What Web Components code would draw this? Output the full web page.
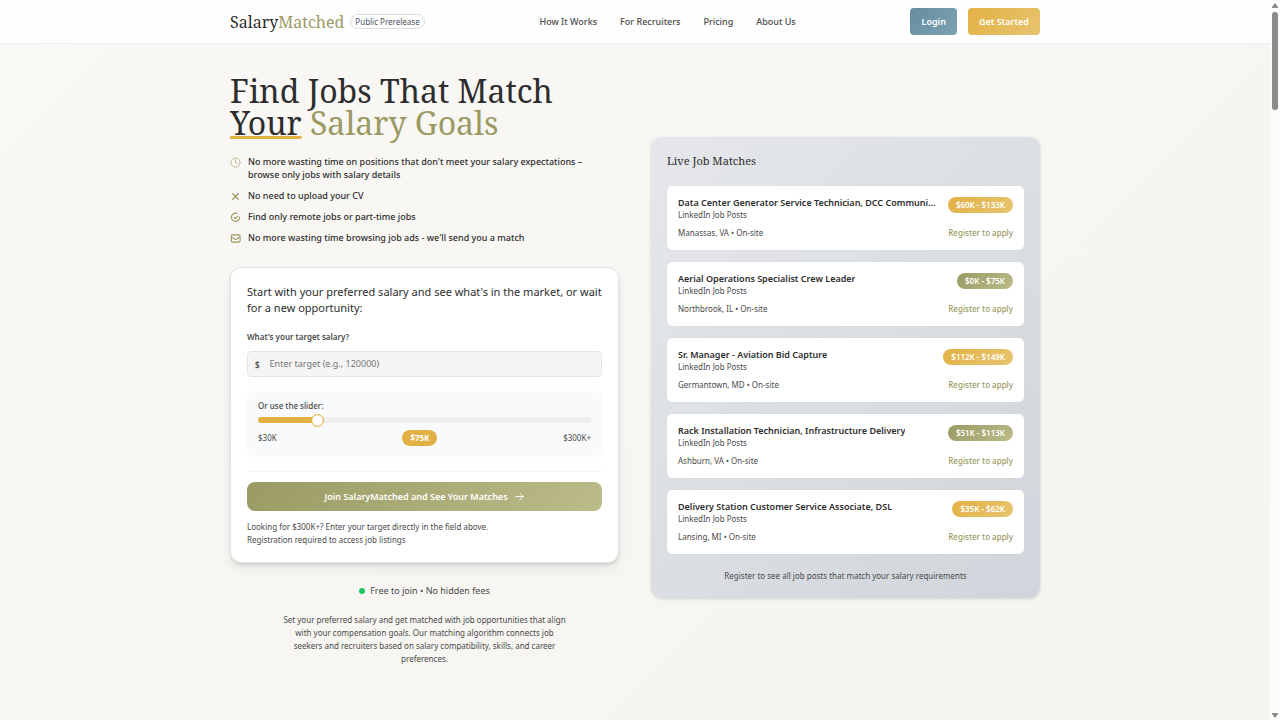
<!DOCTYPE html>
<html lang="en">
<head>
<meta charset="utf-8">
<meta name="viewport" content="width=device-width, initial-scale=1">
<title>SalaryMatched</title>
<style>
  :root {
    --ink: #2d2d2d;
    --text: #4a4a4a;
    --olive: #9a9a62;
    --olive-light: #bcbc8c;
    --gold: #e2b144;
    --gold-light: #e8c470;
    --line: #e3e4e9;
    --serif: "Noto Serif", "DejaVu Serif Condensed", "DejaVu Serif", serif;
  }
  body {
    margin: 0;
    color: var(--text);
    font-family: "Noto Sans", "Open Sans", sans-serif;
  }
</style>
</head>
<body>
<app-shell>
  <site-header>
    <a href="#how">How It Works</a>
    <a href="#recruiters">For Recruiters</a>
    <a href="#pricing">Pricing</a>
    <a href="#about">About Us</a>
  </site-header>
  <hero-section>
    <benefit-item icon="clock">No more wasting time on positions that don't meet your salary expectations – browse only jobs with salary details</benefit-item>
    <benefit-item icon="cross">No need to upload your CV</benefit-item>
    <benefit-item icon="check">Find only remote jobs or part-time jobs</benefit-item>
    <benefit-item icon="mail">No more wasting time browsing job ads - we'll send you a match</benefit-item>
    <salary-form slot="form"></salary-form>
    <jobs-panel slot="jobs">
      <job-card title="Data Center Generator Service Technician, DCC Communi..." place="Manassas, VA • On-site" salary="$60K - $133K" tone="gold"></job-card>
      <job-card title="Aerial Operations Specialist Crew Leader" place="Northbrook, IL • On-site" salary="$0K - $75K" tone="olive"></job-card>
      <job-card title="Sr. Manager - Aviation Bid Capture" place="Germantown, MD • On-site" salary="$112K - $149K" tone="gold"></job-card>
      <job-card title="Rack Installation Technician, Infrastructure Delivery" place="Ashburn, VA • On-site" salary="$51K - $113K" tone="olive"></job-card>
      <job-card title="Delivery Station Customer Service Associate, DSL" place="Lansing, MI • On-site" salary="$35K - $62K" tone="gold"></job-card>
    </jobs-panel>
  </hero-section>
</app-shell>

<script>
class BaseElement extends HTMLElement {
  constructor() {
    super();
    this.attachShadow({ mode: "open" });
  }

  connectedCallback() {
    const template = document.createElement("template");
    template.innerHTML = `
    <style>
    * { margin: 0; padding: 0; box-sizing: border-box; }
    :host { display: block; }
    ${this.getStyles()}
    </style>
    ${this.getTemplate()}
    `;
    this.shadowRoot.replaceChildren(template.content.cloneNode(true));
  }
}

class AppShell extends BaseElement {
  getStyles() {
    return `
    :host {
      display: grid;
      grid-template-columns: minmax(0, 1fr) 10px;
      height: 100vh;
      overflow: hidden;
      background: #fcfcfc;
    }
    .page {
      display: flex;
      flex-direction: column;
      overflow: hidden;
      background: linear-gradient(135deg, #f9f8f5, #f5f4f0);
    }
    `;
  }
  getTemplate() {
    return `
    <div class="page"><slot></slot></div>
    <scroll-rail></scroll-rail>
    `;
  }
}

class ScrollRail extends BaseElement {
  getStyles() {
    return `
    :host {
      display: flex;
      flex-direction: column;
      align-items: center;
      gap: 4px;
    }
    svg { display: block; width: 6px; height: 5px; fill: #8b8b8b; }
    .up { margin-top: 3px; }
    .thumb { width: 6px; height: 98px; border-radius: 3px; background: #8b8b8b; }
    .down { margin: auto 0 2px; }
    `;
  }
  getTemplate() {
    return `
    <svg class="up" viewBox="0 0 6 5"><path d="M3 0L6 4V5H0V4Z"/></svg>
    <div class="thumb"></div>
    <svg class="down" viewBox="0 0 6 5"><path d="M3 5L6 1V0H0V1Z"/></svg>
    `;
  }
}

class SiteHeader extends BaseElement {
  getStyles() {
    return `
    :host {
      background: #fefefe;
      border-bottom: 1px solid #eeeeec;
    }
    .bar {
      display: flex;
      justify-content: space-between;
      align-items: center;
      max-width: 810px;
      height: 43px;
      margin: 0 auto;
    }
    .brand { display: flex; align-items: center; gap: 6px; }
    .logo {
      color: var(--ink);
      font: 16px/24px var(--serif);
      text-decoration: none;
    }
    .logo span { color: var(--olive); }
    .tag {
      padding: 0 4px;
      border: 1px solid #dcdee6;
      border-radius: 8px;
      color: #4b5563;
      font-size: 8px;
      line-height: 13px;
      white-space: nowrap;
    }
    nav { display: flex; gap: 23px; }
    ::slotted(a) {
      color: var(--text);
      font-size: 9px;
      font-weight: 500;
      text-decoration: none;
      white-space: nowrap;
    }
    .actions { display: flex; gap: 11px; }
    button {
      height: 27px;
      padding: 0 11px;
      border: 0;
      border-radius: 4px;
      color: #fff;
      font: 600 9px/13px "Noto Sans", sans-serif;
    }
    .login { background: linear-gradient(135deg, #668d9f, #7ba3b4); }
    .start { background: linear-gradient(135deg, var(--gold), var(--gold-light)); }
    `;
  }
  getTemplate() {
    return `
    <header class="bar">
      <div class="brand">
        <a class="logo" href="#">Salary<span>Matched</span></a>
        <span class="tag">Public Prerelease</span>
      </div>
      <nav><slot></slot></nav>
      <div class="actions">
        <button class="login" type="button">Login</button>
        <button class="start" type="button">Get Started</button>
      </div>
    </header>
    `;
  }
}

class HeroSection extends BaseElement {
  getStyles() {
    return `
    .columns {
      display: grid;
      grid-template-columns: repeat(2, minmax(0, 1fr));
      gap: 32px;
      align-items: start;
      max-width: 810px;
      margin: 31px auto 0;
    }
    h1 {
      color: var(--ink);
      font: 400 32px/32px var(--serif);
      white-space: nowrap;
    }
    .your {
      text-decoration: underline 3px var(--gold);
      text-decoration-skip-ink: none;
      text-underline-offset: 1px;
    }
    .goals { color: var(--olive); }
    .benefits {
      display: flex;
      flex-direction: column;
      gap: 8px;
      margin: 16px 0 23px;
      padding-right: 16px;
    }
    .free {
      display: flex;
      justify-content: center;
      align-items: center;
      gap: 5px;
      margin-top: 20px;
      font-size: 9px;
      line-height: 16px;
    }
    .dot { width: 6px; height: 6px; border-radius: 50%; background: #22c55e; }
    .about {
      max-width: 286px;
      margin: 14px auto 0;
      font-size: 8px;
      line-height: 13px;
      text-align: center;
    }
    .jobs { padding-top: 62px; }
    `;
  }
  getTemplate() {
    return `
    <main class="columns">
      <section>
        <h1>Find Jobs That Match<br><span class="your">Your</span> <span class="goals">Salary Goals</span></h1>
        <div class="benefits"><slot></slot></div>
        <slot name="form"></slot>
        <p class="free"><span class="dot"></span>Free to join • No hidden fees</p>
        <p class="about">Set your preferred salary and get matched with job opportunities that align with your compensation goals. Our matching algorithm connects job seekers and recruiters based on salary compatibility, skills, and career preferences.</p>
      </section>
      <section class="jobs"><slot name="jobs"></slot></section>
    </main>
    `;
  }
}

const ICONS = {
  clock: `<g opacity=".65"><circle cx="12" cy="12" r="10"/><path d="M12 6v6l4 2"/></g>`,
  cross: `<path stroke-width="3" d="M6 6l12 12M18 6L6 18"/>`,
  check: `<path stroke-width="2.500" d="M21 11a9 9 0 1 1-6-8"/><path stroke-width="2.500" d="M9 12l2.500 2.500 5-5"/>`,
  mail: `<rect stroke-width="2.500" x="3" y="4" width="19" height="16" rx="3"/><path stroke-width="2.500" d="M4 9l6 4q2.500 1.500 5 0l6-4"/>`
};

class BenefitItem extends BaseElement {
  getStyles() {
    return `
    :host {
      display: flex;
      gap: 7px;
      color: var(--ink);
      font-size: 9px;
      font-weight: 500;
      line-height: 13px;
    }
    svg {
      flex: none;
      width: 11px;
      height: 11px;
      margin-top: 2px;
      fill: none;
      stroke: var(--olive);
      stroke-width: 2;
      stroke-linecap: round;
      stroke-linejoin: round;
    }
    `;
  }
  getTemplate() {
    return `
    <svg viewBox="0 0 24 24" aria-hidden="true">${ICONS[this.getAttribute("icon")]}</svg>
    <span><slot></slot></span>
    `;
  }
}

class SalaryForm extends BaseElement {
  getStyles() {
    return `
    :host {
      padding: 16px;
      border: 1px solid var(--line);
      border-radius: 11px;
      background: #fff;
      box-shadow: 0 2px 3px rgba(0, 0, 0, .1), 0 7px 12px rgba(0, 0, 0, .06);
    }
    h2 {
      color: var(--ink);
      font-size: 11px;
      font-weight: 400;
      line-height: 16px;
      white-space: nowrap;
    }
    label { display: block; font-size: 8px; line-height: 12px; }
    .target-label { margin: 15px 0 8px; font-weight: 600; }
    .field {
      display: flex;
      align-items: center;
      gap: 10px;
      height: 26px;
      padding: 0 7px;
      border: 1px solid var(--line);
      border-radius: 4px;
      background: #f5f5f5;
    }
    .field span { font-size: 8px; font-weight: 600; }
    .field input {
      flex: 1;
      border: 0;
      outline: 0;
      background: none;
      font: 9px/16px "Noto Sans", sans-serif;
    }
    .field input::placeholder { color: #757575; }
    .slider {
      margin: 14px 0;
      padding: 9px 11px 11px;
      border-radius: 8px;
      background: #f9fafb;
    }
    .slider label { font-weight: 500; }
    input[type=range] {
      display: block;
      appearance: none;
      width: 100%;
      height: 6px;
      margin: 5px 0 7px;
      border-radius: 3px;
      background: linear-gradient(90deg, var(--gold) 17%, #eeeeee 17%);
    }
    input[type=range]::-webkit-slider-thumb {
      appearance: none;
      width: 13px;
      height: 13px;
      border: 1px solid var(--gold);
      border-radius: 50%;
      background: #fff;
      box-shadow: inset 0 0 1px var(--gold);
    }
    .scale {
      display: flex;
      justify-content: space-between;
      align-items: center;
      font-size: 8px;
      line-height: 16px;
    }
    output {
      padding: 0 8px;
      border-radius: 8px;
      background: var(--gold);
      color: #fff;
      font-weight: 700;
    }
    .submit {
      padding-top: 10px;
      border-top: 1px solid #f5f5f5;
    }
    button {
      display: flex;
      justify-content: center;
      align-items: center;
      gap: 6px;
      width: 100%;
      height: 29px;
      border: 0;
      border-radius: 8px;
      background: linear-gradient(135deg, var(--olive), var(--olive-light));
      color: #fff;
      font: 600 9px/16px "Noto Sans", sans-serif;
    }
    button svg {
      width: 11px;
      height: 11px;
      fill: none;
      stroke: currentColor;
      stroke-width: 2;
      stroke-linecap: round;
      stroke-linejoin: round;
    }
    .notes { margin-top: 9px; font-size: 8px; line-height: 13px; }
    `;
  }
  getTemplate() {
    return `
    <form>
      <h2>Start with your preferred salary and see what's in the market, or wait<br>for a new opportunity:</h2>
      <label class="target-label" for="target">What's your target salary?</label>
      <div class="field">
        <span>$</span>
        <input id="target" type="text" inputmode="numeric" placeholder="Enter target (e.g., 120000)">
      </div>
      <div class="slider">
        <label for="range">Or use the slider:</label>
        <input id="range" type="range" min="30" max="300" value="75">
        <div class="scale"><span>$30K</span><output for="range">$75K</output><span>$300K+</span></div>
      </div>
      <div class="submit">
        <button type="button">Join SalaryMatched and See Your Matches
          <svg viewBox="0 0 24 24" aria-hidden="true"><path d="M4 12h16M13 5l7 7-7 7"/></svg>
        </button>
      </div>
      <div class="notes">
        <p>Looking for $300K+? Enter your target directly in the field above.</p>
        <p>Registration required to access job listings</p>
      </div>
    </form>
    `;
  }
  connectedCallback() {
    super.connectedCallback();
    const range = this.shadowRoot.querySelector("#range");
    range.addEventListener("input", () => {
      const part = (range.value - 30) / 2.7;
      range.style.background = `linear-gradient(90deg, var(--gold) ${part}%, #eeeeee ${part}%)`;
      this.shadowRoot.querySelector("output").textContent = `$${range.value}K`;
    });
  }
}

class JobsPanel extends BaseElement {
  getStyles() {
    return `
    :host {
      padding: 16px;
      border-radius: 11px;
      background: linear-gradient(135deg, #e5e7eb, #d1d5db);
      box-shadow: 0 1px 3px rgba(0, 0, 0, .15);
    }
    h2 {
      color: var(--ink);
      font: 400 11px/16px var(--serif);
    }
    .list {
      display: flex;
      flex-direction: column;
      gap: 12px;
      margin: 17px 0 15px;
    }
    .more { font-size: 8px; line-height: 13px; text-align: center; }
    `;
  }
  getTemplate() {
    return `
    <h2>Live Job Matches</h2>
    <div class="list"><slot></slot></div>
    <p class="more">Register to see all job posts that match your salary requirements</p>
    `;
  }
}

class JobCard extends BaseElement {
  getStyles() {
    return `
    :host {
      padding: 11px;
      border-radius: 5px;
      background: #fff;
      box-shadow: 0 0 1px rgba(0, 0, 0, .12);
      font-size: 8px;
      line-height: 12px;
    }
    .row { display: flex; justify-content: space-between; }
    .row + .row { margin-top: 6px; }
    .name { min-width: 0; }
    h3 {
      overflow: hidden;
      color: var(--ink);
      font-size: 9px;
      font-weight: 600;
      line-height: 12px;
      text-overflow: ellipsis;
      white-space: nowrap;
    }
    .salary {
      flex: none;
      height: 16px;
      padding: 0 8px;
      border-radius: 8px;
      color: #fff;
      font-weight: 600;
      line-height: 16px;
    }
    .gold { background: linear-gradient(135deg, var(--gold), var(--gold-light)); }
    .olive { background: linear-gradient(135deg, var(--olive), var(--olive-light)); }
    a { color: var(--olive); font-weight: 500; text-decoration: none; }
    `;
  }
  getTemplate() {
    return `
    <article>
      <div class="row">
        <div class="name">
          <h3>${this.getAttribute("title")}</h3>
          <p>LinkedIn Job Posts</p>
        </div>
        <span class="salary ${this.getAttribute("tone")}">${this.getAttribute("salary")}</span>
      </div>
      <div class="row">
        <p>${this.getAttribute("place")}</p>
        <a href="#register">Register to apply</a>
      </div>
    </article>
    `;
  }
}

customElements.define("app-shell", AppShell);
customElements.define("scroll-rail", ScrollRail);
customElements.define("site-header", SiteHeader);
customElements.define("hero-section", HeroSection);
customElements.define("benefit-item", BenefitItem);
customElements.define("salary-form", SalaryForm);
customElements.define("jobs-panel", JobsPanel);
customElements.define("job-card", JobCard);
</script>
</body>
</html>
